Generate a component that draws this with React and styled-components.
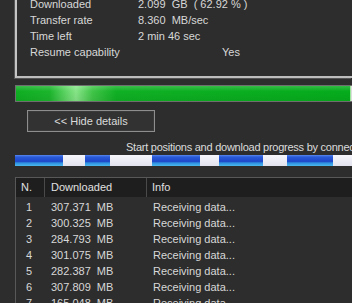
import styled, { createGlobalStyle } from 'styled-components';

const GlobalStyle = createGlobalStyle`
  html, body {
    margin: 0;
    padding: 0;
    background: #2d2d2d;
    overflow: hidden;
  }
  body {
    font-family: "Liberation Sans", Arial, sans-serif;
    font-size: 11px;
    color: #d8d8d8;
  }
`;

const Page = styled.div`
  width: 352px;
  height: 303px;
  overflow: hidden;
  padding-left: 15px;
  box-sizing: border-box;
`;

const DetailsGroup = styled.div`
  margin-top: -12px;
  padding: 8px 0 16px 13px;
  border-left: 2px solid #c4c4c4;
  border-bottom: 2px solid #bdbdbd;
  box-shadow: -1px 1px 0 #555;
`;

const InfoRow = styled.div`
  display: flex;
  height: 16px;
  line-height: 16px;
  white-space: pre;
`;

const InfoLabel = styled.span`
  width: 108px;
  flex: none;
`;

const InfoValue = styled.span`
  padding-left: ${(p) => p.$offset || 0}px;
`;

const ProgressBar = styled.div`
  margin-top: 7px;
  height: 17px;
  border: 1px solid #6e6e6e;
  border-right: none;
  box-sizing: border-box;
  display: flex;
  background: #dcdcdc;
`;

const ProgressFill = styled.div`
  height: 100%;
  border-right: 1px solid #9be79b;
  background:
    linear-gradient(to bottom, rgba(255, 255, 255, 0.18) 0%, rgba(255, 255, 255, 0) 35%, rgba(0, 0, 0, 0.06) 100%),
    linear-gradient(
      to right,
      #0fae22 0%,
      #1bb52c 10%,
      #5fd565 15%,
      #86e487 18%,
      #3fc447 23%,
      #10b024 30%,
      #05ac1c 100%
    );
`;

const Button = styled.button`
  display: block;
  margin: 8px 0 0 12px;
  width: 128px;
  height: 22px;
  padding: 0;
  border: 1px solid #8e8e8e;
  box-shadow: inset 0 0 0 1px #3a3a3a;
  background: #323232;
  color: #dadada;
  font-family: inherit;
  font-size: 11px;
`;

const Caption = styled.div`
  margin-top: 9px;
  padding-left: 111px;
  height: 13px;
  line-height: 13px;
  letter-spacing: -0.25px;
  white-space: nowrap;
  overflow: hidden;
  color: #dcdcdc;
`;

const SegmentBar = styled.div`
  display: flex;
  height: 11px;
  margin-top: 1px;
  background: #3a3a3a;
`;

const Segment = styled.div`
  flex: none;
  height: 100%;
  background: ${(p) =>
    p.$done
      ? 'linear-gradient(to bottom, #5a88ee 0%, #2a5ad8 18%, #1d47c8 58%, #2f8fe0 72%, #4ab8ee 100%)'
      : 'linear-gradient(to bottom, #f6f6fc 0%, #e2e2ee 100%)'};
`;

const Table = styled.div`
  margin-top: 11px;
  border-top: 1px solid #585858;
  border-left: 1px solid #585858;
`;

const HeaderRow = styled.div`
  display: flex;
  height: 19px;
  line-height: 19px;
  background: #1e1e1e;
  margin-bottom: 2px;
`;

const HeaderCell = styled.div`
  flex: none;
  width: ${(p) => p.$width}px;
  padding-left: ${(p) => p.$pad}px;
  box-sizing: border-box;
  border-right: ${(p) => (p.$last ? 'none' : '1px solid #4a4a4a')};
  color: #e0e0e0;
`;

const BodyRow = styled.div`
  display: flex;
  height: 16px;
  line-height: 16px;
  white-space: pre;
`;

const Cell = styled.div`
  flex: none;
  width: ${(p) => p.$width}px;
  padding-left: ${(p) => p.$pad}px;
  box-sizing: border-box;
`;

const details = [
  { label: 'Downloaded', value: '2.099  GB  ( 62.92 % )' },
  { label: 'Transfer rate', value: '8.360  MB/sec' },
  { label: 'Time left', value: '2 min 46 sec' },
  { label: 'Resume capability', value: 'Yes', offset: 84 },
];

const segments = [
  [48, true],
  [22, false],
  [25, true],
  [42, false],
  [48, true],
  [19, false],
  [44, true],
  [24, false],
  [46, true],
  [30, false],
];

const connections = [
  ['1', '307.371  MB'],
  ['2', '300.325  MB'],
  ['3', '284.793  MB'],
  ['4', '301.075  MB'],
  ['5', '282.387  MB'],
  ['6', '307.809  MB'],
  ['7', '165.048  MB'],
];

const App = () => {
  return (
    <Page>
      <GlobalStyle />
      <DetailsGroup>
        {details.map((d) => (
          <InfoRow key={d.label}>
            <InfoLabel>{d.label}</InfoLabel>
            <InfoValue $offset={d.offset}>{d.value}</InfoValue>
          </InfoRow>
        ))}
      </DetailsGroup>

      <ProgressBar>
        <ProgressFill style={{ width: '334px' }} />
      </ProgressBar>

      <Button>&lt;&lt; Hide details</Button>

      <Caption>Start positions and download progress by connections</Caption>

      <SegmentBar>
        {segments.map(([w, done], i) => (
          <Segment key={i} $done={done} style={{ width: w }} />
        ))}
      </SegmentBar>

      <Table>
        <HeaderRow>
          <HeaderCell $width={29} $pad={5}>N.</HeaderCell>
          <HeaderCell $width={102} $pad={6}>Downloaded</HeaderCell>
          <HeaderCell $width={200} $pad={5} $last>Info</HeaderCell>
        </HeaderRow>
        {connections.map(([n, amount]) => (
          <BodyRow key={n}>
            <Cell $width={29} $pad={10}>{n}</Cell>
            <Cell $width={102} $pad={6}>{amount}</Cell>
            <Cell $width={200} $pad={6}>Receiving data...</Cell>
          </BodyRow>
        ))}
      </Table>
    </Page>
  );
};

export default App;
